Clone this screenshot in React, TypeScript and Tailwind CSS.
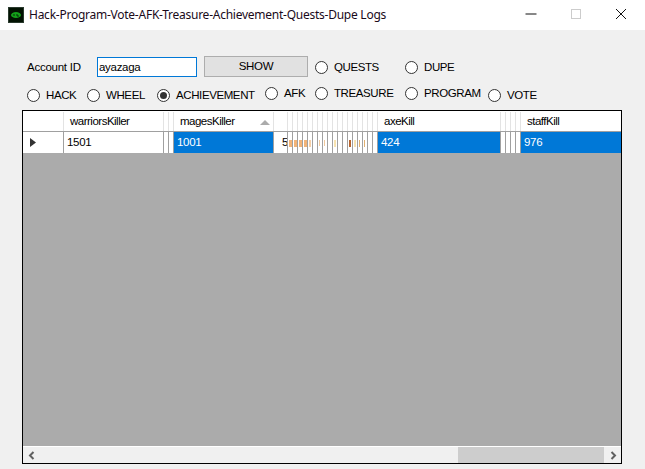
const GRID = "grid grid-cols-[41px_100px_5px_5px_100px_14px_repeat(18,5px)_123px_5px_5px_5px_5px_1fr]";

const WIDE = new Set([4, 24, 29]);

function Radio({ label, checked, x, up }: { label: string; checked?: boolean; x: string; up?: boolean }) {
  return (
    <label className={`flex items-center ${x} ${up ? "-mt-[4px]" : ""}`}>
      <span className="w-[13px] h-[13px] rounded-full border border-[#333] bg-white flex items-center justify-center shrink-0">
        {checked && <span className="w-[7px] h-[7px] rounded-full bg-[#333]" />}
      </span>
      <span className="ml-[6px] pt-[1px] whitespace-nowrap tracking-[-0.4px]">{label}</span>
    </label>
  );
}

const headers: Record<number, string> = { 1: "warriorsKiller", 4: "magesKiller", 24: "axeKill", 29: "staffKill" };
const values: Record<number, string> = { 1: "1501", 4: "1001", 24: "424", 29: "976" };

const smudges: Record<number, string> = {
  6: "w-[3px] h-[7px] bg-[#f2b478]",
  7: "w-[3px] h-[7px] bg-[#f2b478]",
  8: "w-[3px] h-[7px] bg-[#f2b478]",
  9: "w-[3px] h-[7px] bg-[#f2b478]",
  10: "w-[2px] h-[7px] bg-[#f6cfa6]",
  12: "w-[1px] h-[6px] bg-[#f0c89c]",
  13: "w-[1px] h-[6px] bg-[#f0c89c]",
  15: "w-[2px] h-[7px] bg-[#f8e3b0]",
  18: "w-[2px] h-[7px] bg-[#b8642c]",
  19: "w-[2px] h-[7px] bg-[#f8e3b0]",
  20: "w-[1px] h-[7px] bg-[#e2b070]",
  21: "w-[1px] h-[7px] bg-[#e2b070]",
};

export default function App() {
  const cols = Array.from({ length: 30 }, (_, i) => i);
  return (
    <div className="w-[645px] h-[469px] bg-[#f0f0f0] flex flex-col overflow-hidden text-[11.5px] text-black font-['Liberation_Sans',sans-serif]">
      <header className="h-[30px] bg-white flex items-center shrink-0">
        <svg className="ml-[8px] -mt-[1px] w-[16px] h-[16px]" viewBox="0 0 16 16">
          <rect width="16" height="16" fill="#2a3a2e" />
          <rect x="1" y="1" width="14" height="14" fill="#021202" />
          <ellipse cx="8" cy="8" rx="5" ry="3" fill="#14a01a" />
          <path d="M5 8h2M9 7v2h2" stroke="#042a06" strokeWidth="1" fill="none" />
        </svg>
        <span className="ml-[5px] font-['Noto_Sans',sans-serif] text-[12px] text-[#1a0a1a] whitespace-nowrap tracking-[-0.25px]">
          Hack-Program-Vote-AFK-Treasure-Achievement-Quests-Dupe Logs
        </span>
        <div className="ml-auto -mt-[2px] flex items-center">
          <svg width="16" height="16" viewBox="0 0 16 16" className="mr-[29px]"><path d="M2.500 8h11" stroke="#111" /></svg>
          <svg width="16" height="16" viewBox="0 0 16 16" className="mr-[29px]"><rect x="3.500" y="3.500" width="9" height="9" fill="none" stroke="#ccc" /></svg>
          <svg width="16" height="16" viewBox="0 0 16 16" className="mr-[16px]"><path d="M3 3l10 10M13 3L3 13" stroke="#111" /></svg>
        </div>
      </header>

      <div className="flex items-center mt-[26px] h-[21px] pl-[27px]">
        <span className="w-[70px] pt-[2px] tracking-[-0.25px]">Account ID</span>
        <input
          readOnly
          value="ayazaga"
          className="w-[100px] h-[20px] mt-[1px] border border-[#0078d7] bg-white px-[1px] outline-none text-[11.5px] tracking-[-0.3px]"
        />
        <button className="ml-[7px] w-[104px] h-[21px] pt-[1px] bg-[#e1e1e1] border border-[#adadad] text-[11.5px] tracking-[-0.3px]">SHOW</button>
        <Radio label="QUESTS" x="ml-[7px] w-[90px] pt-[1px]" />
        <Radio label="DUPE" x="pt-[1px]" />
      </div>

      <div className="flex items-center mt-[8px] h-[20px] pl-[27px]">
        <Radio label="HACK" x="w-[60px]" />
        <Radio label="WHEEL" x="w-[70px]" />
        <Radio label="ACHIEVEMENT" checked x="w-[108px]" />
        <Radio label="AFK" up x="w-[50px]" />
        <Radio label="TREASURE" up x="w-[90px]" />
        <Radio label="PROGRAM" up x="w-[83px]" />
        <Radio label="VOTE" x="" />
      </div>

      <section className="mt-[5px] ml-[22px] w-[600px] h-[354px] border border-black flex flex-col bg-[#ababab]">
        <div className={`${GRID} h-[21px] bg-white pt-[1px] border-b border-[#a0a0a0] shrink-0`}>
          {cols.map((i) => (
            <div key={i} className="relative border-r border-[#e3e3e3] last:border-r-0 overflow-hidden flex items-center">
              {headers[i] && <span className="pl-[6px] pt-[1px] whitespace-nowrap tracking-[-0.5px]">{headers[i]}</span>}
              {i === 4 && (
                <svg className="absolute right-[3px] top-[8px]" width="10" height="5" viewBox="0 0 10 5">
                  <path d="M5 0l5 5H0z" fill="#ababab" />
                </svg>
              )}
            </div>
          ))}
        </div>
        <div className={`${GRID} h-[21px] bg-white shrink-0`}>
          {cols.map((i) => (
            <div
              key={i}
              className={`relative border-r border-[#a0a0a0] last:border-r-0 overflow-hidden flex items-center ${
                WIDE.has(i) ? "bg-[#0078d7] text-white" : ""
              }`}
            >
              {values[i] && <span className="pl-[3px] pt-[1px] tracking-[-0.3px]">{values[i]}</span>}
              {i === 0 && (
                <svg className="ml-[7px]" width="6" height="9" viewBox="0 0 6 9"><path d="M0 0l6 4.500L0 9z" fill="#333" /></svg>
              )}
              {i === 5 && <span className="pl-[8px] pt-[1px]">5</span>}
              {smudges[i] && <span className={`ml-[1px] mt-[1px] ${smudges[i]}`} />}
            </div>
          ))}
        </div>
        <div className="flex-1" />
        <div className="h-[17px] bg-[#f0f0f0] border-t border-white flex items-center shrink-0">
          <svg className="ml-[5px]" width="8" height="9" viewBox="0 0 8 9">
            <path d="M5.500 1L2 4.500 5.500 8" fill="none" stroke="#606060" strokeWidth="2" />
          </svg>
          <div className="ml-auto h-full w-[146px] bg-[#cdcdcd]" />
          <svg className="ml-[5px] mr-[4px]" width="8" height="9" viewBox="0 0 8 9">
            <path d="M2.500 1L6 4.500 2.500 8" fill="none" stroke="#606060" strokeWidth="2" />
          </svg>
        </div>
      </section>
    </div>
  );
}
